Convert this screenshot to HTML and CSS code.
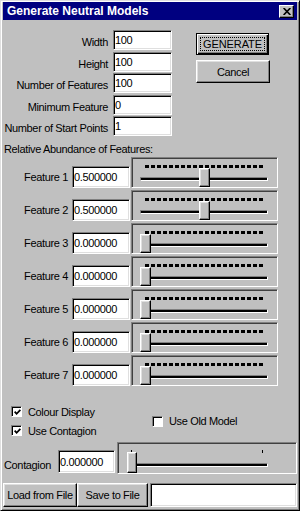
FILE: index.html
```html
<!DOCTYPE html>
<html lang="en">
<head>
  <meta charset="UTF-8" />
  <meta name="viewport" content="width=device-width, initial-scale=1" />
  <title>Generate Neutral Models</title>
  <link rel="stylesheet" href="styles.css">
</head>
<body>

  <div class="window">

    <div class="titlebar">
      <span class="title">Generate Neutral Models</span>
      <button class="close" aria-label="Close">
        <svg width="8" height="7" viewBox="0 0 8 7"><path d="M0.6 0 L7.4 7 M7.4 0 L0.6 7" stroke="#000" stroke-width="1.7" /></svg>
      </button>
    </div>

    <!-- Map size and start parameters -->
    <div class="top">
      <div class="params">
        <label>Width</label><input class="field" type="text" value="100">
        <label>Height</label><input class="field" type="text" value="100">
        <label>Number of Features</label><input class="field" type="text" value="100">
        <label>Minimum Feature</label><input class="field" type="text" value="0">
        <label>Number of Start Points</label><input class="field" type="text" value="1">
      </div>
      <div class="actions">
        <button class="btn btn-default"><span class="focus">GENERATE</span></button>
        <button class="btn btn-cancel">Cancel</button>
      </div>
    </div>

    <div class="heading">Relative Abundance of Features:</div>

    <!-- Feature sliders -->
    <div class="features">
      <div class="feature">
        <label>Feature 1</label>
        <input class="field" type="text" value="0.500000">
        <div class="slider" style="--v:0.5"><div class="ticks"></div><div class="track"></div><div class="thumb"></div></div>
      </div>
      <div class="feature">
        <label>Feature 2</label>
        <input class="field" type="text" value="0.500000">
        <div class="slider" style="--v:0.5"><div class="ticks"></div><div class="track"></div><div class="thumb"></div></div>
      </div>
      <div class="feature">
        <label>Feature 3</label>
        <input class="field" type="text" value="0.000000">
        <div class="slider" style="--v:0"><div class="ticks"></div><div class="track"></div><div class="thumb"></div></div>
      </div>
      <div class="feature">
        <label>Feature 4</label>
        <input class="field" type="text" value="0.000000">
        <div class="slider" style="--v:0"><div class="ticks"></div><div class="track"></div><div class="thumb"></div></div>
      </div>
      <div class="feature">
        <label>Feature 5</label>
        <input class="field" type="text" value="0.000000">
        <div class="slider" style="--v:0"><div class="ticks"></div><div class="track"></div><div class="thumb"></div></div>
      </div>
      <div class="feature">
        <label>Feature 6</label>
        <input class="field" type="text" value="0.000000">
        <div class="slider" style="--v:0"><div class="ticks"></div><div class="track"></div><div class="thumb"></div></div>
      </div>
      <div class="feature">
        <label>Feature 7</label>
        <input class="field" type="text" value="0.000000">
        <div class="slider" style="--v:0"><div class="ticks"></div><div class="track"></div><div class="thumb"></div></div>
      </div>
    </div>

    <!-- Options -->
    <div class="options">
      <div class="opt-col">
        <label class="check"><span class="box"><svg width="7" height="7" viewBox="0 0 7 7"><path d="M0.6 2.6 L2.6 4.8 L6.4 0.9" fill="none" stroke="#000" stroke-width="1.8" /></svg></span>Colour Display</label>
        <label class="check"><span class="box"><svg width="7" height="7" viewBox="0 0 7 7"><path d="M0.6 2.6 L2.6 4.8 L6.4 0.9" fill="none" stroke="#000" stroke-width="1.8" /></svg></span>Use Contagion</label>
      </div>
      <label class="check"><span class="box"></span>Use Old Model</label>
    </div>

    <div class="contagion">
      <label>Contagion</label>
      <input class="field" type="text" value="0.000000">
      <div class="slider slider-wide" style="--v:0"><div class="ticks"></div><div class="track"></div><div class="thumb"></div></div>
    </div>

    <div class="footer">
      <button class="btn btn-load">Load from File</button>
      <button class="btn btn-save">Save to File</button>
      <input class="field file-name" type="text" value="">
    </div>

  </div>

</body>
</html>
```

FILE: styles.css
```css
body {
  margin: 0;
  font-family: "Liberation Sans", Arial, sans-serif;
  font-size: 11px;
  letter-spacing: -0.35px;
  color: #000;
  background-color: #c0c0c0;
}

/* Window frame */
.window {
  box-sizing: border-box;
  width: 300px;
  height: 511px;
  padding: 1px 2px 2px;
  background-color: #c0c0c0;
  border: 1px solid;
  border-color: #dfdfdf #000 #000 #dfdfdf;
  box-shadow: inset 1px 1px #fff, inset -1px -1px #808080;
}

.titlebar {
  display: flex;
  align-items: center;
  justify-content: space-between;
  height: 18px;
  background-color: #000080;
  color: white;
}

.title {
  padding-left: 4px;
  font-size: 12px;
  font-weight: bold;
  letter-spacing: 0;
}

.close {
  display: flex;
  align-items: center;
  justify-content: center;
  box-sizing: border-box;
  width: 15px;
  height: 13px;
  margin-right: 3px;
  padding: 0;
  background-color: #c0c0c0;
  border: 1px solid;
  border-color: #fff #000 #000 #fff;
  box-shadow: inset -1px -1px #808080;
}

/* Shared controls */
.field {
  box-sizing: border-box;
  margin: 0;
  padding: 0 0 0 1px;
  font: inherit;
  letter-spacing: inherit;
  color: #000;
  background-color: white;
  border: 1px solid;
  border-color: #808080 #fff #fff #808080;
  box-shadow: inset 1px 1px #000, inset -1px -1px #dfdfdf;
  outline: none;
}

.btn {
  box-sizing: border-box;
  margin: 0;
  padding: 0;
  font: inherit;
  letter-spacing: inherit;
  color: #000;
  background-color: #c0c0c0;
  border: 1px solid;
  border-color: #fff #000 #000 #fff;
  box-shadow: inset -1px -1px #808080, inset 1px 1px #dfdfdf;
}

/* Top parameters */
.top {
  display: flex;
  margin-top: 10px;
  gap: 24px;
}

.params {
  display: grid;
  grid-template-columns: 105px 59px;
  grid-auto-rows: 20px;
  column-gap: 5px;
  row-gap: 1.5px;
}

.params label {
  padding-top: 2px;
  line-height: 20px;
  text-align: right;
  white-space: nowrap;
}

.params .field {
  height: 20px;
}

.actions {
  display: flex;
  flex-direction: column;
  gap: 5px;
  margin-top: 3px;
}

.btn-default {
  display: flex;
  width: 73px;
  height: 22px;
  border-color: #000;
  box-shadow: inset 1px 1px #fff, inset -1px -1px #000, inset -2px -2px #808080;
}

.btn-default .focus {
  flex: 1;
  margin: 3px;
  border: 1px dotted #000;
  line-height: 12px;
  text-align: center;
  letter-spacing: -0.1px;
}

.btn-cancel {
  width: 74px;
  height: 23px;
}

.heading {
  margin-top: 6px;
  padding-left: 1px;
  line-height: 14px;
}

/* Feature rows */
.features {
  display: flex;
  flex-direction: column;
  gap: 2px;
  margin-top: 1px;
}

.feature {
  display: flex;
  align-items: flex-end;
  height: 31px;
}

.feature label {
  width: 65px;
  margin-right: 4px;
  line-height: 22px;
  text-align: right;
}

.feature .field {
  width: 58px;
  height: 22px;
}

/* Trackbar */
.slider {
  position: relative;
  box-sizing: border-box;
  width: 147px;
  height: 31px;
  margin-left: 1px;
  padding-top: 7px;
  border: 1px solid;
  border-color: #808080 #fff #fff #808080;
  box-shadow: inset 1px 1px #404040;
}

.ticks {
  width: 120px;
  height: 3px;
  margin-left: 13px;
  background: repeating-linear-gradient(90deg, #000 0 4px, transparent 4px 6px);
}

.track {
  box-sizing: border-box;
  width: 128px;
  height: 4px;
  margin: 9px 0 0 8px;
  background-color: #000;
  border: 1px solid;
  border-color: #808080 #fff #fff #808080;
}

.thumb {
  position: absolute;
  top: 10px;
  bottom: 0;
  left: calc(8px + var(--v) * 117px);
  box-sizing: border-box;
  width: 11px;
  background-color: #c0c0c0;
  border: 1px solid;
  border-color: #fff #000 #000 #fff;
  box-shadow: inset -1px -1px #808080, inset 1px 1px #dfdfdf;
}

.slider-wide {
  width: 180px;
  height: 32px;
  margin-left: 2px;
}

.slider-wide .ticks {
  box-sizing: border-box;
  width: 132px;
  height: 3px;
  margin-left: 13px;
  background: none;
  border-left: 1px solid #000;
  border-right: 1px solid #000;
}

.slider-wide .track {
  width: 141px;
  margin: 10px 0 0 9px;
}

.slider-wide .thumb {
  top: 9px;
  left: calc(9px + var(--v) * 131px);
  width: 10px;
}

/* Check boxes */
.options {
  display: flex;
  align-items: center;
  margin-top: 16px;
  padding-left: 8px;
}

.opt-col {
  width: 141px;
}

.check {
  display: flex;
  align-items: center;
  gap: 6px;
  height: 19px;
}

.box {
  display: flex;
  align-items: center;
  justify-content: center;
  box-sizing: border-box;
  width: 11px;
  height: 11px;
  background-color: white;
  border: 1px solid;
  border-color: #808080 #fff #fff #808080;
  box-shadow: inset 1px 1px #000;
}

.box svg {
  margin: 1px 0 0 1px;
}

/* Contagion row */
.contagion {
  display: flex;
  align-items: flex-end;
  margin-top: 2px;
  height: 32px;
}

.contagion label {
  width: 54px;
  padding-left: 1px;
  line-height: 18px;
}

.contagion .field {
  width: 57px;
  height: 23px;
  margin-bottom: 1px;
}

/* Footer */
.footer {
  display: flex;
  align-items: stretch;
  height: 24px;
  margin-top: 9px;
}

.btn-load {
  width: 74px;
}

.btn-save {
  width: 71px;
}

.file-name {
  width: 147px;
  margin-left: 2px;
}
```
